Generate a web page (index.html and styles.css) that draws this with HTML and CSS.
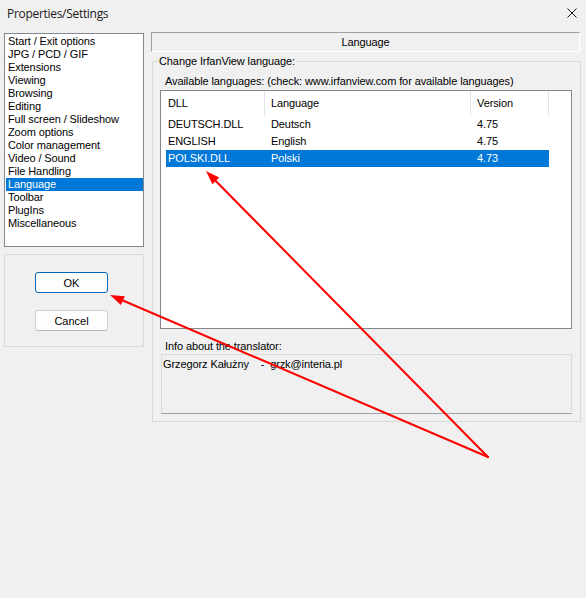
FILE: index.html
```html
<!DOCTYPE html>
<html lang="en">
<head>
    <meta charset="UTF-8">
    <title>Properties/Settings</title>
    <link rel="stylesheet" href="styles.css">
</head>
<body>
    <div class="window">
        <div class="titlebar">
            <span class="title">Properties/Settings</span>
            <button class="close" title="Close">
                <svg width="10" height="10" viewBox="0 0 10 10">
                    <path d="M0.5 0.5 L9.5 9.5 M9.5 0.5 L0.5 9.5" stroke="#1a1a1a" stroke-width="1"/>
                </svg>
            </button>
        </div>

        <div class="main">
            <div class="side">
                <ul class="pages">
                    <li>Start / Exit options</li>
                    <li>JPG / PCD / GIF</li>
                    <li>Extensions</li>
                    <li>Viewing</li>
                    <li>Browsing</li>
                    <li>Editing</li>
                    <li>Full screen / Slideshow</li>
                    <li>Zoom options</li>
                    <li>Color management</li>
                    <li>Video / Sound</li>
                    <li>File Handling</li>
                    <li class="selected">Language</li>
                    <li>Toolbar</li>
                    <li>PlugIns</li>
                    <li>Miscellaneous</li>
                </ul>
                <div class="actions">
                    <button class="btn default">OK</button>
                    <button class="btn">Cancel</button>
                </div>
            </div>

            <div class="page">
                <div class="page-title">Language</div>
                <fieldset class="group">
                    <legend>Change IrfanView language:</legend>
                    <div class="label indent">Available languages: (check: www.irfanview.com for available languages)</div>
                    <div class="listview">
                        <div class="lv-header">
                            <div class="col c1">DLL</div>
                            <div class="col c2">Language</div>
                            <div class="col c3">Version</div>
                            <div class="col c4"></div>
                        </div>
                        <div class="lv-row">
                            <span>DEUTSCH.DLL</span><span>Deutsch</span><span>4.75</span>
                        </div>
                        <div class="lv-row">
                            <span>ENGLISH</span><span>English</span><span>4.75</span>
                        </div>
                        <div class="lv-row selected">
                            <span>POLSKI.DLL</span><span>Polski</span><span>4.73</span>
                        </div>
                    </div>
                    <div class="label indent info-label">Info about the translator:</div>
                    <div class="info">Grzegorz Kałużny&nbsp;&nbsp;&nbsp;&nbsp;-&nbsp;&nbsp;grzk@interia.pl</div>
                </fieldset>
            </div>
        </div>

        <!-- annotation arrows -->
        <svg class="marks" width="586" height="598" viewBox="0 0 586 598">
            <g stroke="#ff0000" stroke-width="2" fill="none" stroke-linecap="round">
                <line x1="488" y1="457" x2="215.8" y2="181"/>
                <line x1="488" y1="457" x2="122.9" y2="300.5"/>
            </g>
            <g fill="#ff0000">
                <polygon points="206,171 219.2,177.6 212.4,184.3"/>
                <polygon points="110,295 124.8,296.2 120.9,304.9"/>
            </g>
        </svg>
    </div>
</body>
</html>
```

FILE: styles.css
```css
*, *::before, *::after{
    box-sizing: border-box;
}
body{
    margin: 0;
    background: #f0f0f0;
}
.window{
    position: relative;
    width: 586px;
    height: 598px;
    background: #f0f0f0;
    font-family: "Liberation Sans", Arial, sans-serif;
    font-size: 11px;
    letter-spacing: -0.1px;
    color: #000;
}

/* title bar */
.titlebar{
    height: 32px;
    display: flex;
    justify-content: space-between;
    padding: 5px 0 0 7px;
}
.title{
    font-family: "Open Sans", "Noto Sans", sans-serif;
    font-size: 12px;
    line-height: 17px;
    letter-spacing: -0.3px;
    color: #1a1a1a;
}
.close{
    width: 10px;
    height: 10px;
    margin: 3px 9px 0 0;
    padding: 0;
    border: none;
    background: none;
}
.close svg{
    display: block;
}

.main{
    display: flex;
    padding-left: 4px;
    gap: 7px;
}

/* left column */
.side{
    width: 140px;
    padding-top: 1px;
}
.pages{
    list-style: none;
    margin: 0;
    height: 214px;
    padding: 1px 0 0 1px;
    border: 1px solid #828790;
    background: #fff;
}
.pages li{
    height: 13px;
    line-height: 13px;
    padding-left: 2px;
    white-space: nowrap;
}
.pages li.selected{
    background: #0078d7;
    color: #fff;
}
.actions{
    margin-top: 7px;
    height: 93px;
    border: 1px solid #dadada;
    padding: 17px 0 0 30px;
    display: flex;
    flex-direction: column;
    gap: 17px;
}
.btn{
    width: 73px;
    height: 21px;
    padding: 0;
    font: inherit;
    color: #000;
    background: #fdfdfd;
    border: 1px solid #d0d0d0;
    border-bottom-color: #b8b8b8;
    border-radius: 3px;
}
.btn.default{
    border: 1px solid #0067c0;
}

/* right page */
.page{
    width: 430px;
}
.page-title{
    width: 429px;
    height: 20px;
    line-height: 18px;
    text-align: center;
    border: 1px solid #fff;
    border-top-color: #a0a0a0;
    border-left-color: #a0a0a0;
}
.group{
    margin: 3px 0 0 1px;
    padding: 8px 8px 8px 7px;
    height: 367px;
    border: 1px solid #dadada;
}
.group legend{
    margin-left: -2px;
    padding: 0 1px;
    line-height: 12px;
}
.label{
    line-height: 13px;
    white-space: nowrap;
}
.indent{
    padding-left: 5px;
}

.listview{
    margin-top: 2px;
    height: 239px;
    border: 1px solid #828790;
    background: #fff;
}
.lv-header{
    display: flex;
    height: 25px;
}
.lv-header .col{
    line-height: 24px;
    padding-left: 6px;
    border-right: 1px solid #e5e5e5;
}
.lv-header .c1{ width: 104px; padding-left: 7px; }
.lv-header .c2{ width: 206px; }
.lv-header .c3{ width: 78px; }
.lv-header .c4{ width: 0; padding: 0; border: none; }
.lv-row{
    display: grid;
    grid-template-columns: 103px 206px 1fr;
    width: 383px;
    height: 17px;
    line-height: 17px;
    margin-left: 5px;
    padding-left: 2px;
    white-space: nowrap;
}
.lv-row.selected{
    background: #0078d7;
    color: #fff;
}

.info-label{
    margin-top: 11px;
}
.info{
    margin: 1px 0 0 1px;
    height: 60px;
    padding: 3px 0 0 1px;
    line-height: 13px;
    border: 1px solid #dadada;
    border-bottom-color: #a0a0a0;
}

.marks{
    position: absolute;
    left: 0;
    top: 0;
    pointer-events: none;
}
```
